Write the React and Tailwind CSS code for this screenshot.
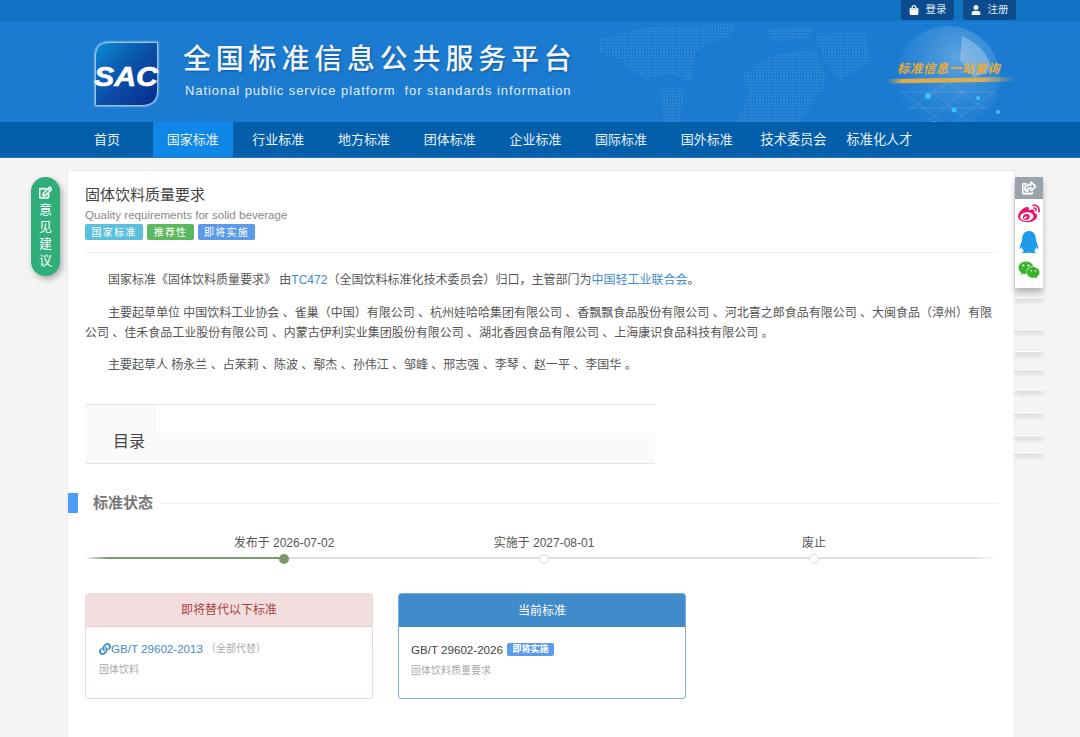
import { FaRegEdit, FaRegShareSquare, FaWeibo, FaQq, FaWeixin, FaLink, FaShoppingBag, FaUser } from 'react-icons/fa';

const navItems = ['首页', '国家标准', '行业标准', '地方标准', '团体标准', '企业标准', '国际标准', '国外标准'];
const drafters = ['杨永兰', '占茉莉', '陈波', '鄢杰', '孙伟江', '邹峰', '邢志强', '李琴', '赵一平', '李国华'];
const ghostRows = ['mt-[9px]', 'mt-[31px]', 'mt-[21px]', 'mt-[17px]', 'mt-[19px]', 'mt-[22px]', 'mt-[22px]', 'mt-[16px]'];

function Logo() {
  return (
    <svg width="68" height="68" viewBox="0 0 68 68" className="shrink-0">
      <defs>
        <linearGradient id="logoBlue" x1="0" y1="0" x2="1" y2="1">
          <stop offset="0" stopColor="#0a8ad0" />
          <stop offset="0.5" stopColor="#0b4fa8" />
          <stop offset="1" stopColor="#0a2a8c" />
        </linearGradient>
        <filter id="logoGlow" x="-10%" y="-10%" width="120%" height="120%">
          <feGaussianBlur stdDeviation="1.2" />
        </filter>
      </defs>
      <path d="M16 2 H65 V50 Q65 66 49 66 H2 V16 Q2 2 16 2 Z" fill="#dcecf8" filter="url(#logoGlow)" />
      <path d="M16 3 H64 V50 Q64 65 49 65 H3 V16 Q3 3 16 3 Z" fill="url(#logoBlue)" />
      <text x="1" y="46" fontFamily="Liberation Sans" fontSize="28" fontWeight="700" fontStyle="italic" fill="#fff" stroke="#fff" strokeWidth="0.6" textLength="64" lengthAdjust="spacingAndGlyphs">SAC</text>
    </svg>
  );
}

function HeaderArt() {
  const sparks = [[-20, 18, 3], [-24, 62, 2], [6, 32, 2.5], [-14, 45, 2], [30, 20, 2], [12, 60, 2], [40, 56, 2], [50, 34, 2], [34, 76, 3], [62, 62, 2], [22, 70, 1.5]];
  return (
    <svg width="480" height="101" viewBox="0 0 480 101" className="absolute right-0 top-0 pointer-events-none">
      <defs>
        <pattern id="mapDots" width="3" height="3" patternUnits="userSpaceOnUse">
          <rect width="2" height="2" fill="#4a9be0" fillOpacity="0.38" />
        </pattern>
        <radialGradient id="globeFill" cx="0.6" cy="0.3" r="0.75">
          <stop offset="0" stopColor="#8fc0ea" stopOpacity="0.6" />
          <stop offset="0.7" stopColor="#3a8fdc" stopOpacity="0.35" />
          <stop offset="1" stopColor="#1a7bd1" stopOpacity="0.15" />
        </radialGradient>
        <linearGradient id="brush" x1="0" y1="0" x2="1" y2="0">
          <stop offset="0" stopColor="#e0a93c" stopOpacity="0" />
          <stop offset="0.12" stopColor="#e0aa44" />
          <stop offset="0.75" stopColor="#d9ad5a" />
          <stop offset="1" stopColor="#d9ad5a" stopOpacity="0" />
        </linearGradient>
      </defs>
      <g fill="url(#mapDots)">
        <path d="M50 5 L135 3 L130 14 L95 30 L92 62 L70 52 L48 60 L20 40 L0 32 L0 18 Z" />
        <path d="M60 66 L85 68 L80 101 L64 101 Z" />
        <path d="M165 8 L215 6 L210 16 L175 22 Z" />
        <path d="M168 35 L215 28 L228 60 L200 101 L136 101 L150 70 L142 55 Z" />
        <path d="M215 14 L265 10 L270 40 L240 60 L225 40 Z" />
      </g>
      <g transform="translate(348 57)">
        <circle cx="0" cy="0" r="52" fill="url(#globeFill)" />
        <g stroke="#cfe4f7" strokeOpacity="0.28" strokeWidth="0.6" fill="none">
          <path d="M-46 14 L0 48 L46 14 M-36 30 L0 4 L36 30 M-22 44 L16 14 M22 44 L-16 14 M-46 14 H46 M-40 30 H40" />
        </g>
        <path d="M14 -42 Q40 -30 44 -8 L26 0 L12 -18 Z" fill="#d8e8f7" fillOpacity="0.32" />
        {sparks.map(([x, y, r], i) => (
          <circle key={i} cx={x} cy={y} r={r} fill="#35c4ff" />
        ))}
      </g>
      <rect x="287" y="57" width="128" height="4.5" rx="2" fill="url(#brush)" transform="rotate(-1 350 59)" />
      <text x="297" y="52" fontFamily="Noto Sans CJK SC" fontSize="12.5" fontStyle="italic" fontWeight="700" fill="#e9ab36" letterSpacing="0.4">标准信息一站查询</text>
    </svg>
  );
}

function Section({ children }) {
  return <p className="mb-[12px] indent-[23px] text-xs leading-5 text-[#555]">{children}</p>;
}

function Milestone({ label, dot }) {
  return (
    <div className="flex w-[270px] flex-col items-center">
      <span className="h-[16px] text-xs leading-4 text-[#555]">{label}</span>
      <span className={dot} />
    </div>
  );
}

export default function App() {
  return (
    <div className="relative flex h-[737px] flex-col overflow-hidden bg-[#f4f4f4] font-['Liberation_Sans','Noto_Sans_CJK_SC',sans-serif]">
      {/* top bar */}
      <div className="flex h-[21px] justify-end gap-[9px] bg-[#1173c4] pr-[64px]">
        <a className="flex h-[20px] w-[53px] items-center justify-center gap-[7px] rounded-b-[3px] bg-[#0d4c8c] text-[10.5px] text-[#dbe8f4]">
          <FaShoppingBag className="text-[10px] text-white" />登录
        </a>
        <a className="flex h-[20px] w-[53px] items-center justify-center gap-[7px] rounded-b-[3px] bg-[#0d4c8c] text-[10.5px] text-[#dbe8f4]">
          <FaUser className="text-[10px] text-white" />注册
        </a>
      </div>

      {/* banner */}
      <div className="relative flex h-[101px] items-start bg-[#1a7bd1] pl-[93px] pt-[19px]">
        <HeaderArt />
        <Logo />
        <div className="relative ml-[22px] pt-[4px]">
          <h1 className="h-[32px] text-[28px] leading-8 font-medium tracking-[4.8px] whitespace-nowrap text-[#f2f6fa] [text-shadow:1px_1px_2px_rgba(0,40,90,0.45)]">全国标准信息公共服务平台</h1>
          <p className="ml-[2px] mt-[7px] text-[13px] leading-4 tracking-[0.93px] whitespace-pre text-[#e3edf6]">National public service platform  for standards information</p>
        </div>
      </div>

      {/* nav */}
      <nav className="flex h-[36px] border-b border-[#2a7bbd] bg-[#045fab] pl-[67px] text-[13px] text-[#e8f0f7]">
        {navItems.map((item) => (
          <a
            key={item}
            className={`mr-[5.7px] flex w-[80px] items-center justify-center ${item === '国家标准' ? 'bg-[#0f87e8]' : ''}`}
          >
            {item}
          </a>
        ))}
        <a className="ml-[3px] mr-[10px] flex w-[76px] items-center justify-center text-[13.2px]">技术委员会</a>
        <a className="flex w-[76px] items-center justify-center text-[13.2px]">标准化人才</a>
      </nav>

      {/* main card */}
      <div className="ml-[67px] mt-[12px] w-[948px] flex-1 border border-b-0 border-[#ececec] bg-white pl-[17px] pr-[16px] pt-[14px]">
        <h2 className="text-[15px] leading-[20px] text-[#444]">固体饮料质量要求</h2>
        <p className="mt-[1px] text-[11.6px] leading-[17px] text-[#888]">Quality requirements for solid beverage</p>
        <div className="mt-[1px] flex gap-[4px] border-b border-[#eee] pb-[12px]">
          <span className="flex h-[16px] w-[58px] items-center justify-center rounded-[2px] bg-[#5bc0de] text-[10px] tracking-[1.2px] text-white">国家标准</span>
          <span className="flex h-[16px] w-[47px] items-center justify-center rounded-[2px] bg-[#5cb85c] text-[10px] tracking-[1.2px] text-white">推荐性</span>
          <span className="flex h-[16px] w-[57px] items-center justify-center rounded-[2px] bg-[#5b9bea] text-[10px] tracking-[1.2px] text-white">即将实施</span>
        </div>

        <div className="mt-[17px] w-[912px]">
          <Section>
            国家标准《固体饮料质量要求》 由<a className="text-[#428bca]">TC472</a>（全国饮料标准化技术委员会）归口，主管部门为<a className="text-[#428bca]">中国轻工业联合会</a>。
          </Section>
          <div className="h-[1px]" />
          <Section>
            主要起草单位 中国饮料工业协会 、雀巢（中国）有限公司 、杭州娃哈哈集团有限公司 、香飘飘食品股份有限公司 、河北喜之郎食品有限公司 、大闽食品（漳州）有限公司 、佳禾食品工业股份有限公司 、内蒙古伊利实业集团股份有限公司 、湖北香园食品有限公司 、上海康识食品科技有限公司 。
          </Section>
          <Section>主要起草人 {drafters.join(' 、')} 。</Section>
        </div>

        {/* toc */}
        <div className="mt-[29px] w-[570px] border-y border-[#e5e5e5]">
          <div className="h-[28px] w-[70px] border-r border-[#f2f2f2] bg-[#fafafa]" />
          <div className="h-[30px] bg-[#fafafa] pl-[28px] text-base leading-[18px] text-[#444]">目录</div>
        </div>

        {/* status */}
        <div className="-ml-[17px] mt-[29px] flex h-[20px] items-center">
          <span className="h-[20px] w-[10px] bg-[#4f9cf5]" />
          <span className="ml-[15px] text-[15px] font-bold text-[#777]">标准状态</span>
          <span className="ml-[7px] h-[1px] flex-1 bg-[#eee]" />
        </div>

        <div className="relative mt-[22px] h-[30px] w-[912px]">
          <div className="absolute left-0 top-[22px] h-[2px] w-full bg-[linear-gradient(90deg,transparent,#dedede_3%,#dedede_97%,transparent)]" />
          <div className="absolute left-0 top-[22px] h-[2px] w-[199px] bg-[linear-gradient(90deg,transparent,#7a9a6a_12%)]" />
          <div className="relative flex pl-[64px]">
            <Milestone label="发布于 2026-07-02" dot="mt-[3px] size-[10px] rounded-full bg-[#7a9a6a]" />
            <div className="-ml-[10px]"><Milestone label="实施于 2027-08-01" dot="mt-[3px] size-[10px] rounded-full border border-[#ddd] bg-white" /></div>
            <Milestone label="废止" dot="mt-[3px] size-[10px] rounded-full border border-[#ddd] bg-white" />
          </div>
        </div>

        {/* replace cards */}
        <div className="mt-[28px] flex gap-[25px]">
          <div className="h-[106px] w-[288px] overflow-hidden rounded-[3px] border border-[#f1d5da]">
            <div className="flex h-[33px] items-center justify-center border-b border-[#ebccd1] bg-[#f2dede] text-xs text-[#a94442]">即将替代以下标准</div>
            <div className="pl-[13px] pt-[13px]">
              <div className="flex h-[17px] items-center text-[11.6px] text-[#428bca]">
                <FaLink className="text-xs" />GB/T 29602-2013
                <span className="ml-[3px] text-[10px] text-[#aaa]">（全部代替）</span>
              </div>
              <p className="mt-[5px] text-[10px] leading-[15px] text-[#aaa]">固体饮料</p>
            </div>
          </div>
          <div className="h-[106px] w-[288px] overflow-hidden rounded-[3px] border border-[#7cafde]">
            <div className="flex h-[33px] items-center justify-center bg-[#428bca] text-xs text-white">当前标准</div>
            <div className="pl-[12px] pt-[14px]">
              <div className="flex h-[17px] items-center text-[11.6px] text-[#444]">
                GB/T 29602-2026
                <span className="ml-[4px] flex h-[13px] w-[47px] items-center justify-center rounded-[2px] bg-[#5b9bea] text-[9px] font-bold text-white">即将实施</span>
              </div>
              <p className="mt-[5px] text-[10px] leading-[15px] text-[#aaa]">固体饮料质量要求</p>
            </div>
          </div>
        </div>
      </div>

      {/* feedback pill */}
      <div className="absolute left-[31px] top-[177px] flex h-[99px] w-[29px] flex-col items-center rounded-full bg-[#2fae7a] pt-[9px] text-[13px] leading-[17px] text-white shadow-[2px_3px_6px_rgba(0,0,0,0.3)]">
        <FaRegEdit className="mb-[2px] text-[13px]" stroke="currentColor" strokeWidth={30} />
        <span>意</span>
        <span>见</span>
        <span>建</span>
        <span>议</span>
      </div>

      {/* share rail */}
      <div className="absolute left-[1015px] top-[177px] flex w-[28px] flex-col">
        <div className="bg-white shadow-[0_5px_6px_rgba(0,0,0,0.25)]">
          <div className="flex h-[22px] items-center justify-center bg-[#9aa3ab] text-[14px] text-white">
            <FaRegShareSquare stroke="currentColor" strokeWidth={30} />
          </div>
          <div className="flex h-[89px] flex-col items-center gap-[6px] pt-[4px]">
            <FaWeibo className="text-[22px] text-[#e8146c]" />
            <FaQq className="text-[22px] text-[#1d9bea]" />
            <FaWeixin className="text-[22px] text-[#3ab52e]" />
          </div>
        </div>
        {ghostRows.map((gap, i) => (
          <div key={i} className={`${gap} h-[1px] bg-white shadow-[0_3px_4px_rgba(0,0,0,0.42)]`} />
        ))}
      </div>
    </div>
  );
}
